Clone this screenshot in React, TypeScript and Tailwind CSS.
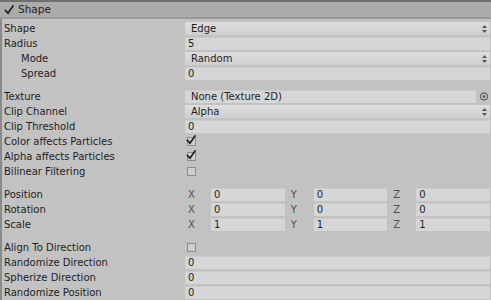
import React from 'react';

type Kind = 'text' | 'dropdown' | 'check' | 'object' | 'vector';

type Prop = {
  label: string;
  kind: Kind;
  value?: string;
  checked?: boolean;
  indent?: boolean;
  xyz?: [string, string, string];
};

const groups: Prop[][] = [
  [
    { label: 'Shape', kind: 'dropdown', value: 'Edge' },
    { label: 'Radius', kind: 'text', value: '5' },
    { label: 'Mode', kind: 'dropdown', value: 'Random', indent: true },
    { label: 'Spread', kind: 'text', value: '0', indent: true },
  ],
  [
    { label: 'Texture', kind: 'object', value: 'None (Texture 2D)' },
    { label: 'Clip Channel', kind: 'dropdown', value: 'Alpha' },
    { label: 'Clip Threshold', kind: 'text', value: '0' },
    { label: 'Color affects Particles', kind: 'check', checked: true },
    { label: 'Alpha affects Particles', kind: 'check', checked: true },
    { label: 'Bilinear Filtering', kind: 'check', checked: false },
  ],
  [
    { label: 'Position', kind: 'vector', xyz: ['0', '0', '0'] },
    { label: 'Rotation', kind: 'vector', xyz: ['0', '0', '0'] },
    { label: 'Scale', kind: 'vector', xyz: ['1', '1', '1'] },
  ],
  [
    { label: 'Align To Direction', kind: 'check', checked: false },
    { label: 'Randomize Direction', kind: 'text', value: '0' },
    { label: 'Spherize Direction', kind: 'text', value: '0' },
    { label: 'Randomize Position', kind: 'text', value: '0' },
  ],
];

const CheckMark = ({ className }: { className?: string }) => (
  <svg width="10" height="10" viewBox="0 0 10 10" className={className}>
    <path d="M1.5 5.5 L4 8.2 L9 1" fill="none" stroke="#1c1c1c" strokeWidth="1.7" strokeLinecap="square" />
  </svg>
);

const Arrows = () => (
  <svg width="5" height="8" viewBox="0 0 5 8" className="mr-[3px] shrink-0">
    <polygon points="0,3 2.5,0 5,3" fill="#555" />
    <polygon points="0,5 2.5,8 5,5" fill="#555" />
  </svg>
);

const Field = ({ children, className = '' }: { children?: React.ReactNode; className?: string }) => (
  <div className={`h-[13px] bg-[#d6d6d6] border-t border-[#cbcbcb] flex items-center leading-none ${className}`}>
    {children}
  </div>
);

const Value = ({ p }: { p: Prop }) => {
  if (p.kind === 'dropdown') {
    return (
      <div className="h-[13px] bg-gradient-to-b from-[#dedede] to-[#cfcfcf] flex items-center justify-between leading-none">
        <span className="pl-[6px]">{p.value}</span>
        <Arrows />
      </div>
    );
  }
  if (p.kind === 'object') {
    return (
      <div className="flex items-center">
        <Field className="flex-1 pl-[6px]">{p.value}</Field>
        <svg width="14" height="13" viewBox="0 0 14 13" className="shrink-0">
          <circle cx="8" cy="6.5" r="3.6" fill="none" stroke="#4a4a4a" strokeWidth="1" />
          <circle cx="8" cy="6.5" r="1.2" fill="#4a4a4a" />
        </svg>
      </div>
    );
  }
  if (p.kind === 'check') {
    return (
      <div className="relative h-[13px] flex items-center pl-[2px]">
        <div className="w-[9px] h-[9px] border border-[#8c8c8c] bg-[#cfcfcf]" />
        {p.checked && <CheckMark className="absolute left-[1px] top-[0px]" />}
      </div>
    );
  }
  if (p.kind === 'vector') {
    const axes = ['X', 'Y', 'Z'];
    return (
      <div className="flex gap-[3px]">
        {axes.map((a, i) => (
          <div key={a} className="flex-1 flex items-center">
            <span className="w-[26px] pl-[3px] text-[#505050] leading-none">{a}</span>
            <Field className="flex-1 pl-[3px]">{p.xyz?.[i]}</Field>
          </div>
        ))}
      </div>
    );
  }
  return <Field className="pl-[3px]">{p.value}</Field>;
};

const Row = ({ p }: { p: Prop }) => (
  <div className="h-[15px] flex items-center">
    <div className={`w-[183px] shrink-0 leading-none ${p.indent ? 'pl-[19px]' : 'pl-[2px]'}`}>{p.label}</div>
    <div className="flex-1 pr-[1px]">
      <Value p={p} />
    </div>
  </div>
);

export default function App() {
  return (
    <div className="w-[491px] h-[300px] overflow-hidden bg-[#c2c2c2] text-[#1e1e1e] text-[10px] font-['DejaVu_Sans',sans-serif]">
      <div className="h-[19px] border-t-2 border-b-2 border-t-[#6f6f6f] border-b-[#9a9a9a] bg-[#ababab] flex items-center pl-[4px] gap-[4px] leading-none">
        <CheckMark />
        <span className="text-[10.5px]">Shape</span>
      </div>
      <div className="border-l-2 border-[#8a8a8a] pt-[2px] h-full">
        {groups.map((g, gi) => (
          <div key={gi} className={gi > 0 ? 'mt-[8px]' : ''}>
            {g.map((p) => (
              <Row key={p.label} p={p} />
            ))}
          </div>
        ))}
      </div>
    </div>
  );
}
